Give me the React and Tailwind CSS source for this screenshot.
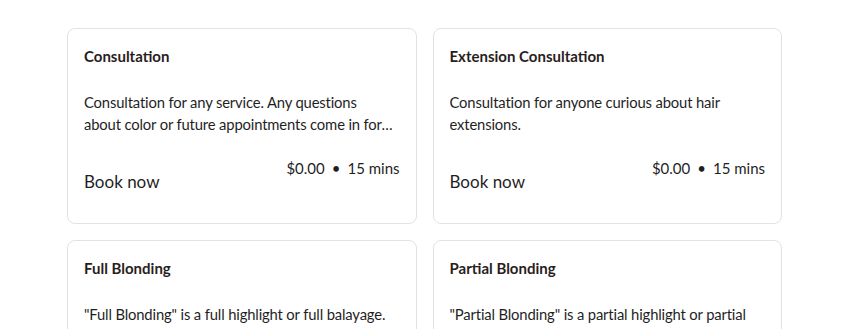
import React from 'react';

const services = [
  {
    name: 'Consultation',
    description:
      'Consultation for any service. Any questions about color or future appointments come in for a quick consultation.',
    price: '$0.00',
    duration: '15 mins',
  },
  {
    name: 'Extension Consultation',
    description: 'Consultation for anyone curious about hair extensions.',
    price: '$0.00',
    duration: '15 mins',
  },
  {
    name: 'Full Blonding',
    description: '"Full Blonding" is a full highlight or full balayage.',
    price: '$0.00',
    duration: '15 mins',
  },
  {
    name: 'Partial Blonding',
    description: '"Partial Blonding" is a partial highlight or partial balayage.',
    price: '$0.00',
    duration: '15 mins',
  },
];

const ServiceCard = ({ service }) => (
  <div className="h-[196px] rounded-lg border border-[#e2e2e2] bg-white px-4 pt-[17px] pb-[29px] flex flex-col">
    <h3 className="text-[15px] leading-5 font-bold text-[#2a1d1d]">{service.name}</h3>
    <p className="mt-[25px] mr-[4px] text-[14.8px] leading-[22px] tracking-[-0.15px] text-[#1f1f1f] line-clamp-2">
      {service.description}
    </p>
    <div className="mt-auto flex justify-between items-start">
      <span className="mt-[2px] text-[17px] leading-6 text-[#1f1f1f]">Book now</span>
      <span className="-mt-[10px] text-[15px] leading-5 text-[#1f1f1f]">
        {service.price}
        <span className="mx-[7px]">•</span>
        {service.duration}
      </span>
    </div>
  </div>
);

export default function App() {
  return (
    <div className="min-h-screen bg-white font-['Lato',sans-serif] pt-7">
      <div className="mx-auto w-[715px] grid grid-cols-2 gap-x-4 gap-y-4">
        {services.map((s) => (
          <ServiceCard key={s.name} service={s} />
        ))}
      </div>
    </div>
  );
}
